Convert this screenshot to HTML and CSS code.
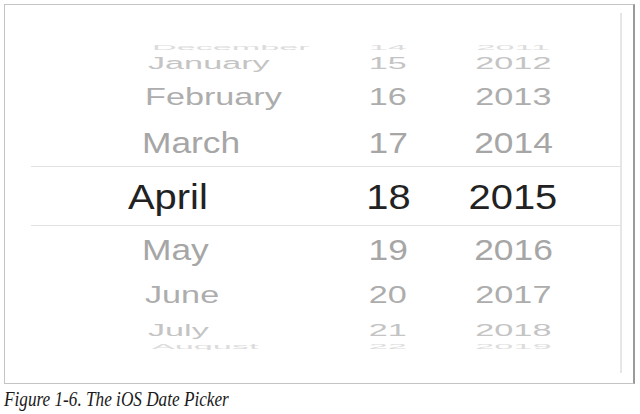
FILE: index.html
```html
<!DOCTYPE html>
<html lang="en">
<head>
<meta charset="UTF-8">
<meta name="viewport" content="width=device-width, initial-scale=1.0">
<title>Figure 1-6. The iOS Date Picker</title>
<link rel="stylesheet" href="styles.css">
</head>
<body>
    <figure class="figure">
        <div class="frame">
            <div class="picker">
                <div class="row edge-top">
                    <div class="cell month"><span>December</span></div>
                    <div class="cell day"><span>14</span></div>
                    <div class="cell year"><span>2011</span></div>
                </div>
                <div class="row far-top">
                    <div class="cell month"><span>January</span></div>
                    <div class="cell day"><span>15</span></div>
                    <div class="cell year"><span>2012</span></div>
                </div>
                <div class="row mid-top">
                    <div class="cell month"><span>February</span></div>
                    <div class="cell day"><span>16</span></div>
                    <div class="cell year"><span>2013</span></div>
                </div>
                <div class="row near-top">
                    <div class="cell month"><span>March</span></div>
                    <div class="cell day"><span>17</span></div>
                    <div class="cell year"><span>2014</span></div>
                </div>
                <div class="row selected">
                    <div class="cell month"><span>April</span></div>
                    <div class="cell day"><span>18</span></div>
                    <div class="cell year"><span>2015</span></div>
                </div>
                <div class="row near-bottom">
                    <div class="cell month"><span>May</span></div>
                    <div class="cell day"><span>19</span></div>
                    <div class="cell year"><span>2016</span></div>
                </div>
                <div class="row mid-bottom">
                    <div class="cell month"><span>June</span></div>
                    <div class="cell day"><span>20</span></div>
                    <div class="cell year"><span>2017</span></div>
                </div>
                <div class="row far-bottom">
                    <div class="cell month"><span>July</span></div>
                    <div class="cell day"><span>21</span></div>
                    <div class="cell year"><span>2018</span></div>
                </div>
                <div class="row edge-bottom">
                    <div class="cell month"><span>August</span></div>
                    <div class="cell day"><span>22</span></div>
                    <div class="cell year"><span>2019</span></div>
                </div>
            </div>
        </div>
        <figcaption class="caption"><span>Figure 1-6. The iOS Date Picker</span></figcaption>
    </figure>
</body>
</html>
```

FILE: styles.css
```css
body {
    margin: 0;
    padding: 0;
    background-color: #fff;
    font-family: "Liberation Sans", Arial, sans-serif;
}
.figure {
    margin: 4px 0 0 4px;
    width: 631px;
}
.frame {
    box-sizing: border-box;
    height: 380px;
    padding-top: 8px;
    border: 1px solid #c4c4c4;
    border-right: 2px solid #9a9a9a;
}
.picker {
    box-sizing: border-box;
    width: 617px;
    height: 360px;
    padding-top: 19px;
    border-right: 2px solid #e6e6e6;
}
.row {
    display: grid;
    grid-template-columns: 335px 96px 154px;
    align-items: center;
    font-size: 30px;
    --sx: 1.14;
    --sy: 1;
}
.cell {
    display: flex;
    align-items: center;
    justify-content: center;
}
.cell span {
    display: inline-block;
    line-height: 1;
    white-space: nowrap;
    transform: scale(var(--sx), var(--sy));
}
.month {
    justify-content: flex-start;
}
.month span {
    transform-origin: left center;
}

.edge-top, .edge-bottom {
    color: #dcdcdc;
    --sy: 0.25;
}
.edge-top { height: 16px; }
.edge-bottom { height: 16px; }
.edge-top .month, .edge-bottom .month { padding-left: 147px; }

.far-top, .far-bottom {
    color: #c4c4c4;
    --sy: 0.55;
}
.far-top { height: 26px; }
.far-bottom { height: 16px; }
.far-top .month, .far-bottom .month { padding-left: 143px; }

.mid-top, .mid-bottom {
    color: #adadad;
    --sy: 0.8;
}
.mid-top { height: 46px; }
.mid-bottom { height: 41px; }
.mid-top .month, .mid-bottom .month { padding-left: 140px; }

.near-top, .near-bottom {
    color: #a6a6a6;
    font-size: 31px;
    --sy: 0.95;
}
.near-top { height: 46px; }
.near-bottom { height: 48px; }
.near-top .month, .near-bottom .month { padding-left: 137px; }

.selected {
    box-sizing: border-box;
    height: 60px;
    margin-left: 26px;
    grid-template-columns: 309px 96px 154px;
    border-top: 1px solid #e2e2e2;
    border-bottom: 1px solid #e2e2e2;
    color: #222;
    font-size: 35px;
}
.selected .month {
    padding-left: 97px;
}

.caption {
    margin: 4px 0 0 0;
    font-family: "Liberation Serif", "Times New Roman", serif;
    font-style: italic;
    font-size: 20px;
    color: #1a1a1a;
}
.caption span {
    display: inline-block;
    transform: scaleX(0.86);
    transform-origin: left center;
}
```
